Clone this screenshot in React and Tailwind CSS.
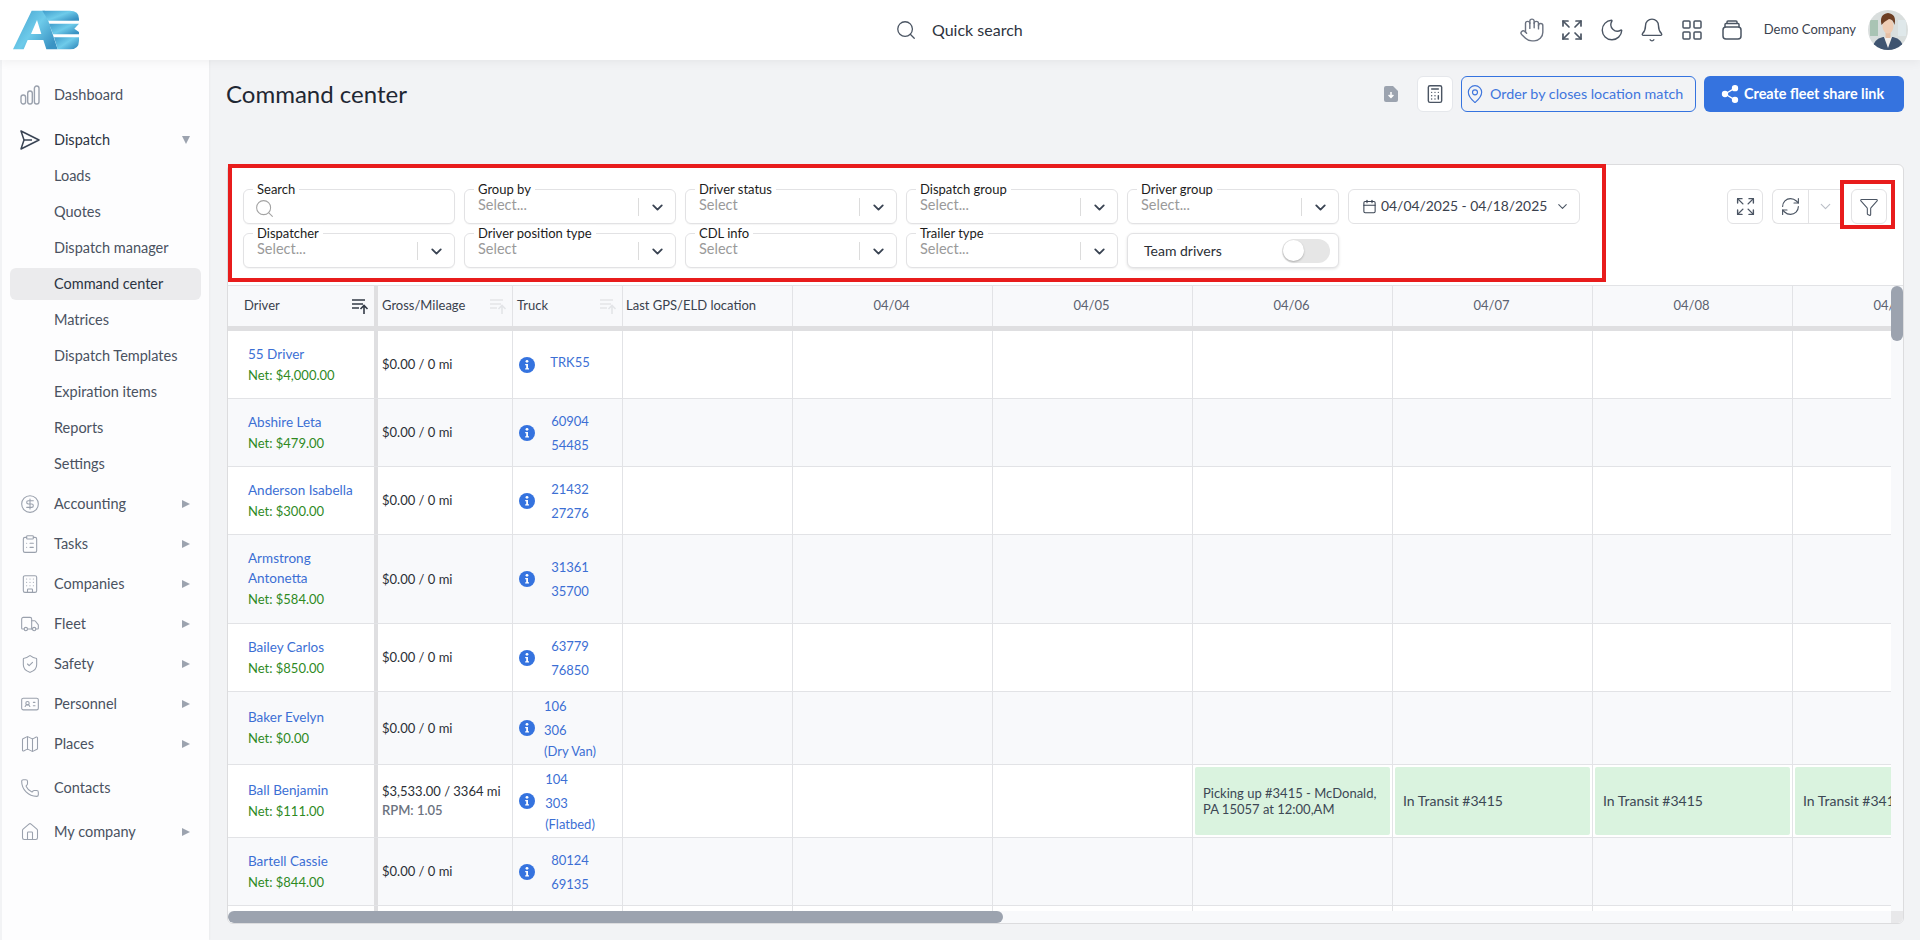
import React from "react";
import { Search, ChevronDown, Hand, Expand, Moon, Bell, LayoutGrid, Calculator, RefreshCw, Funnel, CircleDollarSign, Building, Truck, ShieldCheck, IdCard, Map as MapIcon, Phone, House, ClipboardList, MapPin, Share2, Calendar } from "lucide-react";

function Logo() {
  return (
    <svg width="66" height="40" viewBox="12 12 198 120" className="block">
      <defs>
        <linearGradient id="lg" x1="0" y1="0" x2="1" y2="0.7">
          <stop offset="0" stopColor="#3f9ccb" />
          <stop offset="0.55" stopColor="#6ecbea" />
          <stop offset="1" stopColor="#3a93c3" />
        </linearGradient>
      </defs>
      <path fill="url(#lg)" fillRule="evenodd" d="M12 130 L68 14 H108 L146 130 H112 L103 102 H56 L44 130 Z M66 84 H97 L84 42 Z" />
      <path fill="url(#lg)" d="M100 14 H182 Q210 14 210 38 V44 H118 Z" />
      <path fill="url(#lg)" d="M120 53 H210 L196 68 L210 78 V85 H132 Z" />
      <path fill="url(#lg)" d="M135 94 H210 V104 Q210 130 182 130 H146 Z" />
    </svg>
  );
}

function Avatar() {
  return (
    <svg width="40" height="40" viewBox="0 0 40 40" className="block rounded-full">
      <rect width="40" height="40" fill="#d9dedd" />
      <rect x="2" y="10" width="8" height="16" fill="#a9c4b4" />
      <rect x="30" y="10" width="8" height="16" fill="#dfe8ea" />
      <path d="M4 40 Q5 29 15 27 L25 27 Q35 29 36 40 Z" fill="#3f5470" />
      <path d="M16 27 L20 38 L24 27 Z" fill="#f2efec" />
      <rect x="17.5" y="21" width="5" height="7" fill="#e6bfa4" />
      <ellipse cx="20" cy="16" rx="5.5" ry="7.5" fill="#efcdb4" />
      <path d="M13.5 15 Q11 4 20 3 Q29 4 26.5 15 Q25 9 21 9 Q17 11 13.5 15 Z" fill="#6d3f24" />
    </svg>
  );
}

const I = "#9aa1ad";
function BarsIcon() {
  return (
    <svg width="20" height="20" viewBox="0 0 20 20" fill="none" stroke={I} strokeWidth="1.4">
      <rect x="1" y="10" width="4.6" height="9" rx="2.2" />
      <rect x="7.7" y="6" width="4.6" height="13" rx="2.2" />
      <rect x="14.4" y="1" width="4.6" height="18" rx="2.2" />
    </svg>
  );
}
function PlaneIcon() {
  return (
    <svg width="20" height="20" viewBox="0 0 20 20" fill="none" stroke="#3a4454" strokeWidth="1.5" strokeLinejoin="round">
      <path d="M1 1 L19 10 L1 19 L4 10 Z" />
      <path d="M4 10 H12" />
    </svg>
  );
}
function StackIcon() {
  return (
    <svg width="20" height="20" viewBox="0 0 20 20" fill="none" stroke="#4b5563" strokeWidth="1.5" strokeLinejoin="round">
      <rect x="1" y="7" width="18" height="12" rx="3" />
      <path d="M3 7 V4.5 Q3 3.5 4 3.5 H16 Q17 3.5 17 4.5 V7" />
      <path d="M5 3.5 V2 Q5 1 6 1 H14 Q15 1 15 2 V3.5" />
    </svg>
  );
}
function DocIcon() {
  return (
    <svg width="14" height="16" viewBox="0 0 14 16">
      <path d="M2 0 H9 L14 5 V14 Q14 16 12 16 H2 Q0 16 0 14 V2 Q0 0 2 0 Z" fill="#9ca3af" />
      <path d="M7 6 V11 M4.6 9 L7 11.4 L9.4 9" stroke="#fff" strokeWidth="1.5" fill="none" />
    </svg>
  );
}
function InfoIcon() {
  return (
    <svg width="16" height="16" viewBox="0 0 16 16" className="shrink-0">
      <circle cx="8" cy="8" r="8" fill="#3573df" />
      <circle cx="8" cy="4.3" r="1.4" fill="#fff" />
      <path d="M6.2 7 H9 V11.3 H10 V12.6 H6.2 V11.3 H7.2 V8.3 H6.2 Z" fill="#fff" />
    </svg>
  );
}
function SortIcon({ active }) {
  const c = active ? "#333b47" : "#e3e5e8";
  return (
    <svg width="17" height="15" viewBox="0 0 17 15" fill="none" stroke={c} strokeWidth="1.4">
      <path d="M0 1 H13 M0 5 H11 M0 9 H7" />
      <path d="M12 15 V7 M8.5 10 L12 6.5 L15.5 10" strokeWidth="1.6" />
    </svg>
  );
}

const sideIcon = { size: 24, color: I, strokeWidth: 1.3 };
const nav = [
  { t: "Dashboard", icon: <BarsIcon />, cls: "mt-0", c: "text-[#4a5261]" },
  { t: "Dispatch", icon: <PlaneIcon />, cls: "mt-[9px]", c: "text-[#2c3442]", caret: "down" },
  { t: "Loads", sub: 1 },
  { t: "Quotes", sub: 1 },
  { t: "Dispatch manager", sub: 1 },
  { t: "Command center", sub: 1, active: 1 },
  { t: "Matrices", sub: 1 },
  { t: "Dispatch Templates", sub: 1 },
  { t: "Expiration items", sub: 1 },
  { t: "Reports", sub: 1 },
  { t: "Settings", sub: 1 },
  { t: "Accounting", icon: <CircleDollarSign {...sideIcon} />, cls: "mt-1", caret: "right" },
  { t: "Tasks", icon: <ClipboardList {...sideIcon} />, cls: "mt-1", caret: "right" },
  { t: "Companies", icon: <Building {...sideIcon} />, cls: "mt-1", caret: "right" },
  { t: "Fleet", icon: <Truck {...sideIcon} />, cls: "mt-1", caret: "right" },
  { t: "Safety", icon: <ShieldCheck {...sideIcon} />, cls: "mt-1", caret: "right" },
  { t: "Personnel", icon: <IdCard {...sideIcon} />, cls: "mt-1", caret: "right" },
  { t: "Places", icon: <MapIcon {...sideIcon} />, cls: "mt-1", caret: "right" },
  { t: "Contacts", icon: <Phone {...sideIcon} />, cls: "mt-2" },
  { t: "My company", icon: <House {...sideIcon} />, cls: "mt-2", caret: "right" },
];

function Sidebar() {
  return (
    <aside className="ml-[2px] w-[207px] shrink-0 bg-[#fdfdfe] pt-[17px] shadow-[1px_0_2px_rgba(0,0,0,0.03)]">
      {nav.map((n) =>
        n.sub ? (
          <div key={n.t} className="flex h-9 items-center">
            <div className={"ml-2 flex h-8 w-[191px] items-center rounded-md pl-[44px] text-[14.5px] " + (n.active ? "bg-[#ebebed] text-[#2c3442]" : "text-[#4a5261]")}>{n.t}</div>
          </div>
        ) : (
          <div key={n.t} className={"flex h-9 items-center pl-[18px] text-[14.5px] " + n.cls + " " + (n.c || "text-[#4a5261]")}>
            <span className="flex w-[20px] justify-center">{n.icon}</span>
            <span className="ml-[14px]">{n.t}</span>
            {n.caret === "down" && <span className="ml-auto mr-[19px] h-0 w-0 border-x-[4px] border-t-[8px] border-x-transparent border-t-[#9ca3af]" />}
            {n.caret === "right" && <span className="ml-auto mr-[19px] h-0 w-0 border-y-[4px] border-l-[8px] border-y-transparent border-l-[#9ca3af]" />}
          </div>
        )
      )}
    </aside>
  );
}

function Field({ label, ph, search }) {
  return (
    <div className="relative flex h-[35px] w-[212px] shrink-0 rounded-md border border-[#e2e2e4] bg-white shadow-[0_1px_1px_rgba(0,0,0,0.04)]">
      <span className="absolute -top-[9px] left-[9px] bg-white px-1 text-[13px] leading-4 text-[#1c1c1c]">{label}</span>
      {search ? (
        <div className="pl-[10px] pt-[8px]"><Search size={21} color="#a3a3a3" strokeWidth={1.2} /></div>
      ) : (
        <>
          <div className="flex-1 pl-[13px] pt-[5px] text-[14.5px] leading-5 text-[#9a9a9a]">{ph}</div>
          <div className="mt-[8px] h-[18px] w-px bg-[#dcdcdc]" />
          <div className="flex w-[36px] justify-center pl-px pt-[9px]"><ChevronDown size={17} color="#394352" strokeWidth={2.6} /></div>
        </>
      )}
    </div>
  );
}

const rows = [
  { h: "h-[68px]", name: ["55 Driver"], net: "$4,000.00", gross: "$0.00 / 0 mi", truck: ["TRK55"], adj: "pb-[6px]" },
  { h: "h-[68px]", name: ["Abshire Leta"], net: "$479.00", gross: "$0.00 / 0 mi", truck: ["60904", "54485"] },
  { h: "h-[68px]", name: ["Anderson Isabella"], net: "$300.00", gross: "$0.00 / 0 mi", truck: ["21432", "27276"] },
  { h: "h-[89px]", name: ["Armstrong", "Antonetta"], net: "$584.00", gross: "$0.00 / 0 mi", truck: ["31361", "35700"] },
  { h: "h-[68px]", name: ["Bailey Carlos"], net: "$850.00", gross: "$0.00 / 0 mi", truck: ["63779", "76850"] },
  { h: "h-[73px]", name: ["Baker Evelyn"], net: "$0.00", gross: "$0.00 / 0 mi", truck: ["106", "306"], extra: "(Dry Van)", adj: "pb-[3px]" },
  { h: "h-[73px]", name: ["Ball Benjamin"], net: "$111.00", gross: "$3,533.00 / 3364 mi", rpm: "RPM: 1.05", truck: ["104", "303"], extra: "(Flatbed)", adj: "pb-[3px]", trip: true },
  { h: "h-[68px]", name: ["Bartell Cassie"], net: "$844.00", gross: "$0.00 / 0 mi", truck: ["80124", "69135"] },
  { h: "h-[68px]", empty: true },
];
const days = ["04/04", "04/05", "04/06", "04/07", "04/08", "04/09"];

function Trip({ children }) {
  return (
    <div className="flex h-full items-center rounded-[2px] bg-[#daf3df] pl-2 pr-1 text-[13px] leading-4 text-[#3c4754]">{children}</div>
  );
}

function Row({ r, i }) {
  const bg = i % 2 ? "bg-[#f8f9fb]" : "bg-white";
  const cell = "shrink-0 border-r border-[#e2e3e6]";
  return (
    <div className={"flex shrink-0 border-b border-[#e2e3e6] " + r.h + " " + bg}>
      <div className="flex w-[150px] shrink-0 flex-col justify-center border-r-[4px] border-[#dfdfe1] pl-5">
        {!r.empty && r.name.map((n) => <div key={n} className="text-[13.5px] leading-5 text-[#3c6fd4]">{n}</div>)}
        {!r.empty && <div className="text-[13px] leading-[22px] text-[#2f8a1f]">Net: {r.net}</div>}
      </div>
      <div className={cell + " flex w-[135px] flex-col justify-center pl-1 text-[13px] " + (r.rpm ? "" : "pb-[1px]")}>
        {!r.empty && <div className={r.rpm ? "leading-[19px] text-[#2b2f36]" : "leading-5 text-[#2b2f36]"}>{r.gross}</div>}
        {r.rpm && <div className="leading-[19px] font-semibold text-[#6b7280]">{r.rpm}</div>}
      </div>
      <div className={cell + " flex w-[110px] items-center pl-[6px] pr-[17px] text-[13px] text-[#3c6fd4]"}>
        {!r.empty && <InfoIcon />}
        {!r.empty && (
          <div className="flex flex-1 justify-center">
            <div className={r.adj || ""}>
              {r.truck.map((t) => <div key={t} className="leading-6">{t}</div>)}
              {r.extra && <div className="leading-[18px]">{r.extra}</div>}
            </div>
          </div>
        )}
      </div>
      <div className={cell + " w-[170px]"} />
      {days.map((d, k) => (
        <div key={d} className={cell + " w-[200px] px-[2px] py-[2px]"}>
          {r.trip && k === 2 && <Trip><span className="whitespace-nowrap">Picking up #3415 - McDonald,<br />PA 15057 at 12:00,AM</span></Trip>}
          {r.trip && k > 2 && <Trip><span className="whitespace-nowrap text-[14px]">In Transit #3415</span></Trip>}
        </div>
      ))}
    </div>
  );
}

function HeaderCell({ w, pl, label, sort, active, extra }) {
  return (
    <div className={"flex shrink-0 items-center text-[13px] " + w + " " + pl + " " + extra}>
      <span className="flex-1 text-[#3a414d]">{label}</span>
      {sort && <span className="mr-[5px]"><SortIcon active={active} /></span>}
    </div>
  );
}

function TopIcon({ children }) {
  return <span className="flex w-10 justify-center">{children}</span>;
}

export default function App() {
  return (
    <div className="relative flex h-[940px] w-[1920px] flex-col overflow-hidden bg-[#f2f3f5] [font-family:Lato,sans-serif]">
      <header className="relative z-10 flex h-[60px] shrink-0 items-center bg-white shadow-[0_2px_10px_rgba(0,0,0,0.06)]">
        <div className="w-[895px] shrink-0 pl-[13px]"><Logo /></div>
        <div className="flex items-center gap-[15px] text-[16px] text-[#2e3440]">
          <Search size={22} color="#4b5563" strokeWidth={1.4} />
          <span>Quick search</span>
        </div>
        <div className="ml-auto flex items-center pr-3">
          <div className="flex items-center">
            <TopIcon><Hand size={26} color="#6b7280" strokeWidth={1.3} /></TopIcon>
            <TopIcon><Expand size={24} color="#4b5563" strokeWidth={1.7} /></TopIcon>
            <TopIcon><Moon size={26} color="#4b5563" strokeWidth={1.3} /></TopIcon>
            <TopIcon><Bell size={26} color="#4b5563" strokeWidth={1.3} /></TopIcon>
            <TopIcon><LayoutGrid size={24} color="#4b5563" strokeWidth={1.5} /></TopIcon>
            <TopIcon><StackIcon /></TopIcon>
          </div>
          <span className="ml-3 text-[13px] text-[#3a414d]">Demo Company</span>
          <span className="ml-3"><Avatar /></span>
        </div>
      </header>

      <div className="flex min-h-0 flex-1">
        <Sidebar />
        <main className="flex min-w-0 flex-1 flex-col pb-4 pl-[18px] pr-4">
          <div className="mt-4 flex h-9 shrink-0 items-center">
            <h1 className="-ml-px text-[24px] text-[#1f2733]">Command center</h1>
            <div className="ml-auto flex items-center">
              <DocIcon />
              <button className="ml-[19px] flex h-9 w-[36px] items-center justify-center rounded-md border border-[#e5e7eb] bg-white"><Calculator size={20} color="#4b5563" strokeWidth={1.7} /></button>
              <button className="ml-2 flex h-9 w-[235px] items-center gap-[5px] rounded-md border border-[#3573df] pl-[3px] text-[14.3px] text-[#3f76dd]"><MapPin size={20} strokeWidth={1.4} /><span>Order by closes location match</span></button>
              <button className="ml-2 flex h-9 w-[200px] items-center gap-1 rounded-md bg-[#3573df] pl-4 text-[14.4px] font-bold text-white"><Share2 size={20} fill="#fff" strokeWidth={1.6} /><span>Create fleet share link</span></button>
            </div>
          </div>

          <section className="mt-[52px] flex min-h-0 flex-1 flex-col overflow-hidden rounded-md border border-[#dcdcde] bg-white">
            <div className="flex h-[121px] shrink-0 border-b border-[#e2e3e6] pl-[15px] pt-6">
              <div className="flex flex-col gap-[9px]">
                <div className="flex gap-[9px]">
                  <Field label="Search" search />
                  <Field label="Group by" ph="Select..." />
                  <Field label="Driver status" ph="Select" />
                  <Field label="Dispatch group" ph="Select..." />
                  <Field label="Driver group" ph="Select..." />
                  <div className="flex h-[35px] w-[232px] items-center rounded-md border border-[#e2e2e4] pl-[13px] text-[13.9px] text-[#3a414d]">
                    <Calendar size={15} color="#394352" strokeWidth={1.7} />
                    <span className="ml-[4px]">04/04/2025 - 04/18/2025</span>
                    <ChevronDown size={15} color="#4b5563" strokeWidth={1.7} className="ml-2" />
                  </div>
                </div>
                <div className="flex gap-[9px]">
                  <Field label="Dispatcher" ph="Select..." />
                  <Field label="Driver position type" ph="Select" />
                  <Field label="CDL info" ph="Select" />
                  <Field label="Trailer type" ph="Select..." />
                  <div className="flex h-[35px] w-[212px] items-center rounded-md border border-[#e2e2e4] bg-white pl-4 text-[14px] text-[#2b2f36] shadow-[0_1px_3px_rgba(0,0,0,0.12)]">
                    <span className="flex-1">Team drivers</span>
                    <span className="mr-2 flex h-6 w-[48px] items-center rounded-full bg-[#e6e6e6] pl-[1px]"><span className="h-[21px] w-[21px] rounded-full bg-white shadow-[0_1px_2px_rgba(0,0,0,0.25)]" /></span>
                  </div>
                </div>
              </div>
              <div className="ml-auto mr-[16px] flex h-[35px] items-start">
                <button className="flex h-[35px] w-[36px] items-center justify-center rounded-md border border-[#e2e2e4]"><Expand size={21} color="#4b5563" strokeWidth={1.6} /></button>
                <div className="ml-[9px] flex h-[35px] w-[70px] items-center rounded-l-md border border-r-0 border-[#e2e2e4]">
                  <span className="flex w-[36px] justify-center border-r border-[#e2e2e4] py-[6px]"><RefreshCw size={21} color="#4b5563" strokeWidth={1.3} /></span>
                  <span className="flex flex-1 justify-center"><ChevronDown size={17} color="#b9bec6" strokeWidth={1.6} /></span>
                </div>
                <button className="ml-[9px] flex h-[35px] w-[36px] items-center justify-center rounded-md border border-[#e2e2e4]"><Funnel size={20} color="#4b5563" strokeWidth={1.3} /></button>
              </div>
            </div>

            <div className="flex min-h-0 flex-1">
              <div className="flex min-w-0 flex-1 flex-col overflow-hidden">
                <div className="flex h-[45px] shrink-0 border-b-[5px] border-[#dfdfe1] bg-[#f8f9fb]">
                  <HeaderCell w="w-[150px]" pl="pl-4" label="Driver" sort active extra="border-r-[4px] border-[#dfdfe1]" />
                  <HeaderCell w="w-[135px]" pl="pl-1" label="Gross/Mileage" sort extra="border-r border-[#e2e3e6]" />
                  <HeaderCell w="w-[110px]" pl="pl-1" label="Truck" sort extra="border-r border-[#e2e3e6]" />
                  <HeaderCell w="w-[170px]" pl="pl-[3px]" label="Last GPS/ELD location" extra="border-r border-[#e2e3e6]" />
                  {days.map((d) => (
                    <div key={d} className="flex w-[200px] shrink-0 items-center justify-center border-r border-[#e2e3e6] pr-[2px] text-[13px] text-[#5b6270]">{d}</div>
                  ))}
                </div>
                <div className="flex min-h-0 flex-1 flex-col overflow-hidden">
                  {rows.map((r, i) => <Row key={i} r={r} i={i} />)}
                </div>
              </div>
              <div className="w-3 shrink-0 bg-[#f8f9fb]">
                <div className="h-[55px] rounded-full bg-[#9ca3af]" />
              </div>
            </div>
            <div className="flex h-3 shrink-0 bg-[#f8f9fb]">
              <div className="h-3 w-[775px] rounded-full bg-[#9ca3af]" />
              <div className="ml-auto h-3 w-3 bg-[#e8e8ea]" />
            </div>
          </section>
        </main>
      </div>

      <div className="pointer-events-none absolute left-[228px] top-[164px] h-[118px] w-[1378px] border-4 border-[#e81c1c]" />
      <div className="pointer-events-none absolute left-[1840px] top-[180px] h-[49px] w-[55px] border-4 border-[#e81c1c]" />
    </div>
  );
}
